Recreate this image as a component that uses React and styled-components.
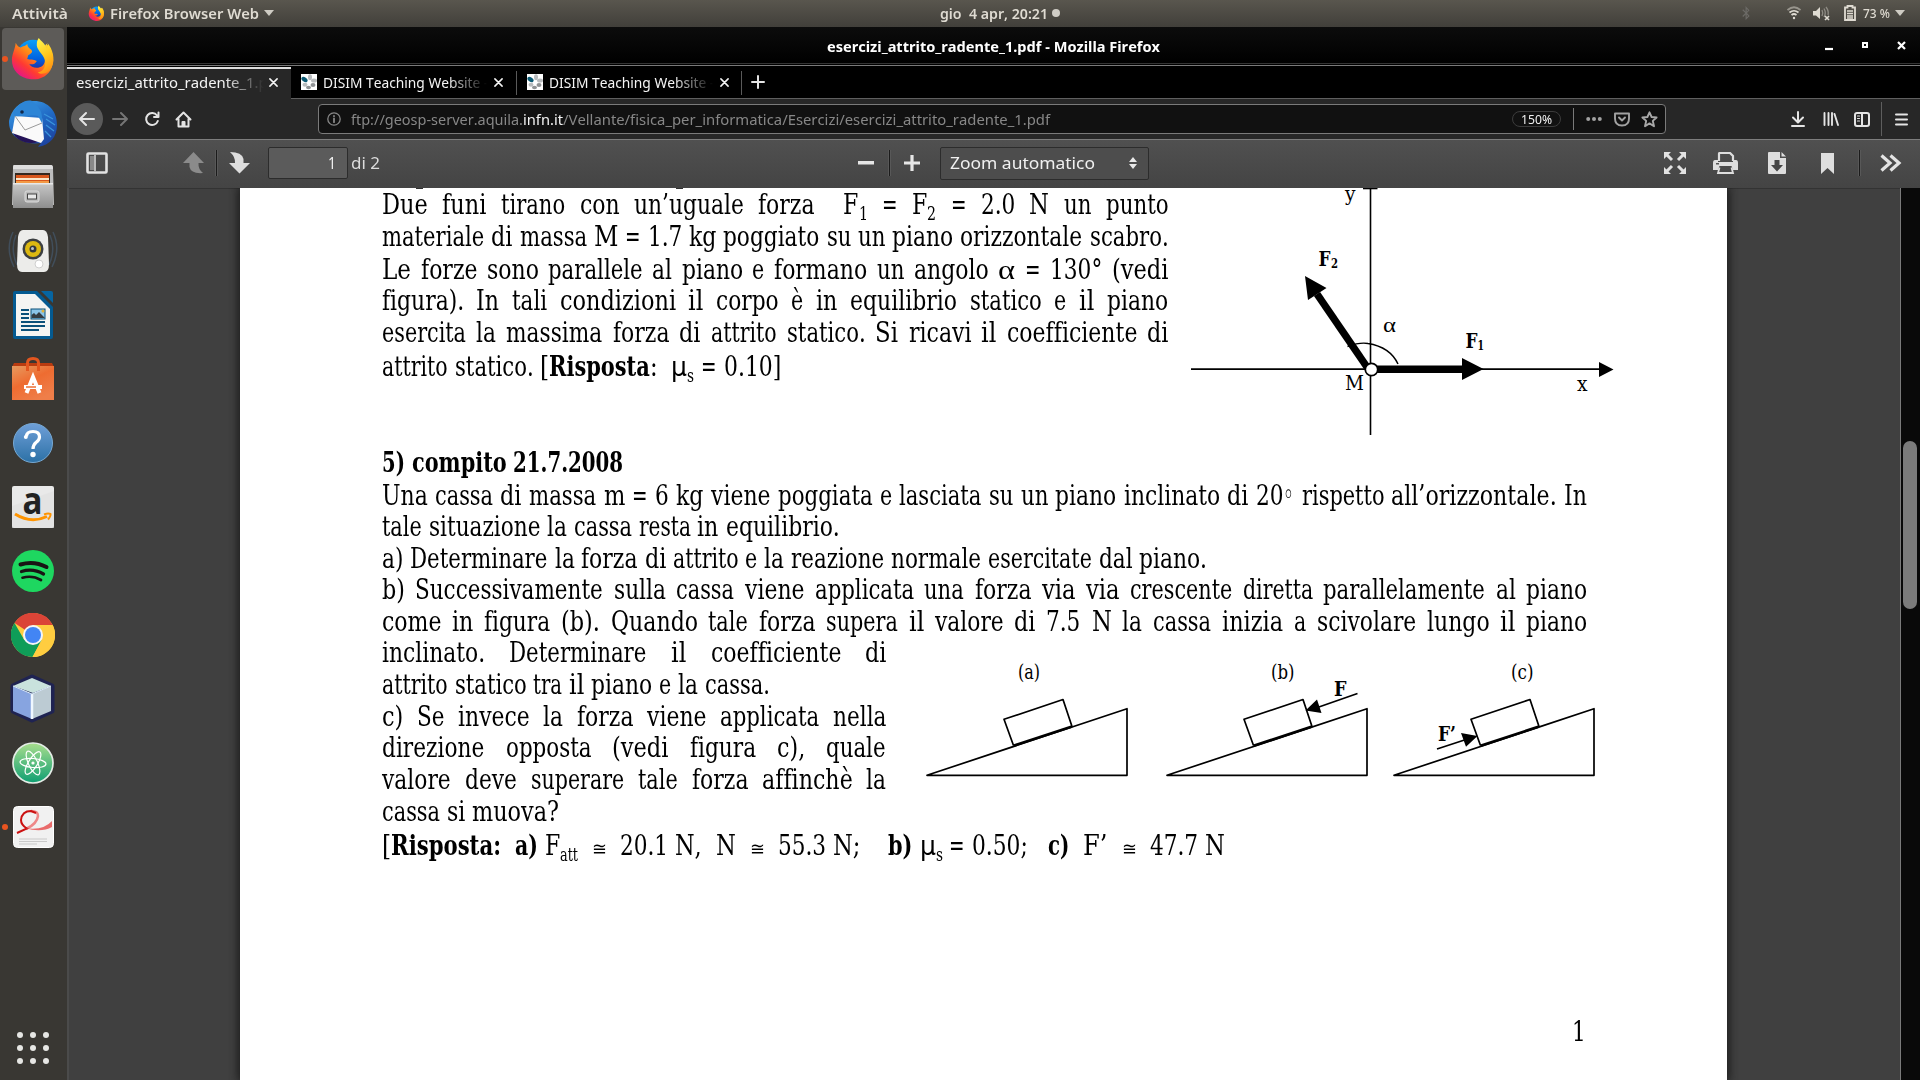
import React from "react";
import styled, { createGlobalStyle } from "styled-components";
import { FaBluetoothB } from "react-icons/fa";

const UI = '"Noto Sans", "Open Sans", sans-serif';
const SERIF = '"DejaVu Serif Condensed", "DejaVu Serif", serif';
const TIMES = '"Liberation Serif", serif';

const Global = createGlobalStyle`
  * { box-sizing: border-box; }
  html, body { margin: 0; padding: 0; height: 1080px; overflow: hidden; background: #000; }
`;

/* ---------- text measuring ---------- */
const ctx = document.createElement("canvas").getContext("2d");
ctx.fontKerning = "none";
const measure = (text, font) => {
  ctx.font = font;
  return ctx.measureText(text).width;
};

const Slot = styled.span`
  display: inline-block;
  white-space: pre;
  vertical-align: baseline;
  flex: none;
`;
const Squeezed = styled.span`
  display: inline-block;
  transform-origin: 0 50%;
  font-family: ${(p) => p.$family};
  font-size: ${(p) => p.$size}px;
  font-weight: ${(p) => p.$weight};
  font-kerning: none;
  font-variant-ligatures: none;
  white-space: pre;
`;

function Fitted({ text, width, size = 15, weight = 400, family = UI }) {
  const natural = measure(text, `${weight} ${size}px ${family}`);
  return (
    <Slot style={{ width }}>
      <Squeezed $family={family} $size={size} $weight={weight} style={{ transform: `scaleX(${width / natural})`, marginRight: width - natural }}>
        {text}
      </Squeezed>
    </Slot>
  );
}

/* ---------- shell ---------- */
const Screen = styled.div`
  width: 1920px;
  height: 1080px;
  display: flex;
  flex-direction: column;
  overflow: hidden;
  background: #000;
  font-family: ${UI};
`;
const Spacer = styled.div`
  flex: ${(p) => (p.$w ? "none" : 1)};
  width: ${(p) => (p.$w ? p.$w + "px" : "auto")};
`;
const TopBar = styled.header`
  height: 27px;
  flex: none;
  display: grid;
  grid-template-columns: 940px 1fr 175px;
  background: linear-gradient(#59564e, #413f3a);
  color: #dfdbd2;
  line-height: 25px;
  padding-bottom: 2px;
`;
const BarGroup = styled.div`
  display: flex;
  align-items: center;
  padding-left: ${(p) => p.$pad || 0}px;
`;
const Triangle = styled.span`
  width: 10px;
  height: 6px;
  background: #cfccc4;
  clip-path: polygon(0 0, 100% 0, 50% 100%);
`;
const Dot = styled.span`
  width: 8px;
  height: 8px;
  border-radius: 50%;
  background: #d0cdc6;
  margin-left: 4px;
`;
const Body = styled.div`
  flex: 1;
  display: flex;
  min-height: 0;
`;
const Dock = styled.nav`
  width: 67px;
  flex: none;
  display: flex;
  flex-direction: column;
  background: #393733;
  padding-top: 1px;
`;
const DockItem = styled.div`
  height: 62px;
  width: 62px;
  margin: 0 0 2px 2px;
  border-radius: 4px;
  display: flex;
  align-items: center;
  justify-content: center;
  flex: none;
  background: ${(p) => (p.$active ? "#5d5b58" : "transparent")};
  position: relative;
  &::before {
    content: "";
    display: ${(p) => (p.$running ? "block" : "none")};
    position: absolute;
    left: 0;
    top: 28px;
    width: 6px;
    height: 6px;
    border-radius: 50%;
    background: #e95420;
  }
`;
const AppsButton = styled.div`
  margin: auto 0 16px 17px;
  display: grid;
  grid-template-columns: repeat(3, 6px);
  gap: 7px;
  span { height: 6px; border-radius: 50%; background: #e6e6e4; }
`;
const Window = styled.main`
  flex: 1;
  display: flex;
  flex-direction: column;
  min-width: 0;
`;
const TitleBar = styled.div`
  height: 37px;
  flex: none;
  display: flex;
  align-items: center;
  padding-left: 760px;
  padding-top: 2px;
  background: linear-gradient(#0c0c0c, #000);
  border-bottom: 1px solid #333;
  color: #fff;
  line-height: 34px;
`;
const WinButtons = styled.div`
  margin-left: auto;
  padding-right: 14px;
  display: flex;
`;

/* ---------- tabs ---------- */
const TabStrip = styled.div`
  height: 34px;
  flex: none;
  display: flex;
  border-top: 1px solid #7a7a7a;
  background: #000;
  margin-top: 1px;
`;
const Tab = styled.div`
  flex: none;
  width: ${(p) => p.$w}px;
  display: flex;
  align-items: center;
  padding: ${(p) => (p.$active ? "0 0 3px 9px" : "0 0 0 10px")};
  border-top: ${(p) => (p.$active ? "2px solid #dedede" : "none")};
  margin-top: ${(p) => (p.$active ? "1px" : "0")};
  height: ${(p) => (p.$active ? "32px" : "33px")};
  background: ${(p) => (p.$active ? "#272727" : "#000")};
  border-bottom: ${(p) => (p.$active ? "none" : "1px solid #5f5f5f")};
  color: #f4f4f4;
  line-height: 27px;
`;
const TabLabel = styled.div`
  width: ${(p) => p.$w}px;
  flex: none;
  overflow: hidden;
  white-space: nowrap;
  mask-image: linear-gradient(to right, #000 ${(p) => p.$w - 40}px, transparent ${(p) => p.$w}px);
`;
const TabDivider = styled.div`
  width: 1px;
  height: 24px;
  margin-top: 5px;
  background: #5a5a5a;
`;
const DividerCell = styled.div`
  width: 1px;
  border-bottom: 1px solid #5f5f5f;
`;
const TabRest = styled.div`
  flex: 1;
  display: flex;
  align-items: center;
  padding-left: 9px;
  color: #e4e4e4;
  border-bottom: 1px solid #5f5f5f;
`;

/* ---------- navigation ---------- */
const NavBar = styled.div`
  height: 41px;
  flex: none;
  display: flex;
  align-items: center;
  padding-left: 4px;
  background: #272727;
  border-bottom: 1px solid #7d7d7d;
  color: #e4e4e4;
`;
const BackButton = styled.div`
  width: 32px;
  height: 32px;
  border-radius: 50%;
  background: #5a5a5a;
  display: flex;
  align-items: center;
  justify-content: center;
`;
const UrlBox = styled.div`
  width: 1348px;
  height: 30px;
  display: flex;
  align-items: center;
  border: 1px solid #7a7a7a;
  border-radius: 4px;
  background: #111;
  padding-left: 8px;
  color: #878787;
  line-height: 28px;
`;
const Host = styled.span`
  color: #f4f4f4;
`;
const ZoomPill = styled.div`
  width: 49px;
  height: 16px;
  border: 1px solid #3c3c3c;
  border-radius: 8px;
  display: flex;
  align-items: center;
  justify-content: center;
  color: #f0f0f0;
  line-height: 14px;
`;
const Rule = styled.div`
  width: 1px;
  height: ${(p) => p.$h}px;
  background: ${(p) => p.$c};
`;

/* ---------- pdf toolbar ---------- */
const PdfBar = styled.div`
  height: 48px;
  flex: none;
  display: flex;
  align-items: center;
  padding: 0 0 2px 19px;
  background: linear-gradient(#505050, #444);
  color: #dcdcdc;
  line-height: 30px;
`;
const BarRule = styled.div`
  width: 3px;
  height: 26px;
  background: #1b1b1b;
  border: solid #585858;
  border-width: 0 1px;
`;
const PageField = styled.div`
  width: 80px;
  height: 32px;
  border: 1px solid #2c2c2c;
  border-radius: 2px;
  background: #5b5b5b;
  display: flex;
  justify-content: flex-end;
  padding-right: 11px;
  color: #f2f2f2;
  line-height: 29px;
`;
const ZoomSelect = styled.div`
  width: 209px;
  height: 33px;
  border: 1px solid #2c2c2c;
  border-radius: 2px;
  background: #4d4d4d;
  display: flex;
  align-items: center;
  padding-left: 9px;
  color: #f0f0f0;
`;

/* ---------- document ---------- */
const Viewer = styled.div`
  flex: 1;
  min-height: 0;
  display: flex;
  background: #404040;
  border-left: 2px solid #4b4b4b;
  box-shadow: inset 0 1px 0 #333;
`;
const Sheet = styled.article`
  width: 1487px;
  margin-left: 171px;
  height: 892px;
  flex: none;
  background: #fff;
  box-shadow: 0 0 9px 2px #1a1a1a;
  clip-path: inset(0 -12px);
  color: #000;
  display: flex;
  flex-direction: column;
  padding: 0 0 0 142px;
`;
const Descenders = styled.div`
  height: 1px;
  flex: none;
  display: flex;
  gap: 253px;
  padding-left: 34px;
  span { width: 7px; height: 1px; background: #333; }
`;
const Split = styled.section`
  display: grid;
  grid-template-columns: ${(p) => p.$cols};
  flex: none;
  height: ${(p) => p.$h}px;
  & > svg { overflow: visible; display: block; }
`;
const Block = styled.section`
  width: 1205px;
`;
const Line = styled.div`
  height: ${(p) => p.$h}px;
  line-height: 30px;
  font-family: ${TIMES};
  font-size: 27.5px;
  white-space: nowrap;
  text-align: left;
  text-align-last: ${(p) => (p.$just ? "justify" : "left")};
`;
const Sub = styled.span`
  display: inline-block;
  line-height: 0;
  position: relative;
  top: 6px;
`;
const PageNumber = styled.footer`
  margin: auto 0 29px;
  width: 1204px;
  text-align: right;
  line-height: 32px;
`;
const ScrollTrack = styled.div`
  margin-left: auto;
  width: 20px;
  border-left: 1px solid #7a7a7a;
  background: #090909;
  padding: 253px 3px 0 2px;
`;
const ScrollThumb = styled.div`
  height: 168px;
  border-radius: 7px;
  background: #7b7b7b;
`;

function Word({ text, bold, size = 27.5, family = SERIF }) {
  const weight = bold ? 700 : 400;
  return <Fitted text={text} size={size} weight={weight} family={family} width={measure(text, `${weight} ${size}px ${TIMES}`)} />;
}

/* Segments: a string is plain text, {b} bold, {low} subscript, {sym,size,w,font} a symbol glyph. */
function Text({ segs }) {
  return segs.map((seg, i) => {
    const plain = typeof seg === "string";
    if (!plain && seg.low) return <Sub key={i}><Word text={seg.low} size={18} /></Sub>;
    if (!plain && seg.sym) return <Fitted key={i} text={seg.sym} size={seg.size} width={seg.w} family={seg.font} />;
    const text = plain ? seg : seg.b;
    return text.split(/( +)/).map((part, j) => {
      if (!part) return null;
      if (part[0] === " ") return "\u00a0".repeat(part.length - 1) + " ";
      return <Word key={i + "-" + j} text={part} bold={!plain} />;
    });
  });
}

const ALPHA = { sym: "α", size: 27, w: 17, font: TIMES };
const MU = { sym: "μ", size: 27, w: 16, font: '"DejaVu Sans", sans-serif' };
const CONG = { sym: "≅", size: 18, w: 15, font: '"DejaVu Sans", sans-serif' };
const RING = { sym: "◦", size: 30, w: 11, font: '"DejaVu Sans", sans-serif' };

const ropes = [
  [32, true, ["Due funi tirano con un’uguale forza  F", { low: "1" }, " = F", { low: "2" }, " = 2.0 N un punto"]],
  [33, true, ["materiale di massa M = 1.7 kg poggiato su un piano orizzontale scabro."]],
  [31, true, ["Le forze sono parallele al piano e formano un angolo ", ALPHA, " = 130° (vedi"]],
  [32, true, ["figura). In tali condizioni il corpo è in equilibrio statico e il piano"]],
  [34, true, ["esercita la massima forza di attrito statico. Si ricavi il coefficiente di"]],
  [95, false, ["attrito statico. [", { b: "Risposta" }, ":  ", MU, { low: "s" }, " = 0.10]"]],
];
const crate = [
  [33, false, [{ b: "5) compito 21.7.2008" }]],
  [31, true, ["Una cassa di massa m = 6 kg viene poggiata e lasciata su un piano inclinato di 20", RING, " rispetto all’orizzontale. In"]],
  [32, false, ["tale situazione la cassa resta in equilibrio."]],
  [31, false, ["a) Determinare la forza di attrito e la reazione normale esercitate dal piano."]],
  [32, true, ["b) Successivamente sulla cassa viene applicata una forza via via crescente diretta parallelamente al piano"]],
  [31, true, ["come in figura (b). Quando tale forza supera il valore di 7.5 N la cassa inizia a scivolare lungo il piano"]],
];
const crateNarrow = [
  [32, true, ["inclinato. Determinare il coefficiente di"]],
  [32, false, ["attrito statico tra il piano e la cassa."]],
  [31, true, ["c) Se invece la forza viene applicata nella"]],
  [32, true, ["direzione opposta (vedi figura c), quale"]],
  [32, true, ["valore deve superare tale forza affinchè la"]],
  [34, false, ["cassa si muova?"]],
];
const answer = [
  [34, false, ["[", { b: "Risposta:  a)" }, " F", { low: "att" }, "  ", CONG, "  20.1 N,  N  ", CONG, "  55.3 N;    ", { b: "b)" }, " ", MU, { low: "s" }, " = 0.50;   ", { b: "c)" }, "  F’  ", CONG, "  47.7 N"]],
];

const Lines = ({ rows }) => rows.map(([h, just, segs], i) => <Line key={i} $h={h} $just={just}><Text segs={segs} /></Line>);

/* ---------- figures ---------- */
const Label = ({ x, y, w, children, bold, size = 20, family = SERIF }) => (
  <text x={x} y={y} textLength={w} lengthAdjust="spacingAndGlyphs" fontFamily={family} fontSize={size} fontWeight={bold ? 700 : 400}>{children}</text>
);

function ForcesFigure() {
  return (
    <svg width="430" height="257" viewBox="1190 189 430 257">
      <g stroke="#000" fill="none">
        <path d="M1370.5 188V435" strokeWidth="1.6" />
        <path d="M1363 188.5H1377.5" strokeWidth="1.6" />
        <path d="M1191 369.2H1600" strokeWidth="1.7" />
        <path d="M1372 369.2H1463" strokeWidth="7.4" />
        <path d="M1369 370L1317 294" strokeWidth="7.4" />
        <path d="M1347.500 346.500Q1360 342 1368 343.500Q1390 347 1398 364" strokeWidth="1.5" />
      </g>
      <path d="M1599 362L1613.500 369.500L1599 377ZM1462 358L1483.500 369L1462 380ZM1305 276L1326.500 288L1308 300Z" />
      <circle cx="1371.500" cy="369.500" r="6.200" fill="#fff" stroke="#000" strokeWidth="1.700" />
      <Label x={1345} y={201} w={10.5}>y</Label>
      <Label x={1318.500} y={266} w={12} bold>F</Label>
      <Label x={1331} y={268} w={7} size={13.500} bold>2</Label>
      <Label x={1383} y={332} w={13} family={TIMES} size={22}>α</Label>
      <Label x={1465.500} y={348} w={12} bold>F</Label>
      <Label x={1477.500} y={350} w={6.500} size={13.500} bold>1</Label>
      <Label x={1345} y={390} w={19}>M</Label>
      <Label x={1577} y={391} w={10.5}>x</Label>
    </svg>
  );
}

const Incline = ({ dx }) => (
  <g transform={`translate(${dx} 0)`} fill="none" stroke="#000" strokeWidth="1.700" strokeLinejoin="round">
    <path d="M927 775.300H1127V708.700Z" />
    <path d="M1013.500 745.500L1004 719.300L1063 699.500L1072 726.500" />
    <path d="M1013.500 745.700L1072 726.500" strokeWidth="2.600" />
  </g>
);

function InclineFigure() {
  return (
    <svg width="690" height="150" viewBox="920 637 690 150">
      <Incline dx={0} />
      <Incline dx={240} />
      <Incline dx={467} />
      <path d="M1357.500 693.500L1316 708M1437 749L1466 739.500" stroke="#000" strokeWidth="1.700" />
      <path d="M1305.500 710.500L1317 699.500L1321.500 713ZM1477.500 736L1461 733L1466 746.700Z" />
      <Label x={1018} y={679} w={22}>(a)</Label>
      <Label x={1271} y={679} w={23.500}>(b)</Label>
      <Label x={1511} y={679} w={22.500}>(c)</Label>
      <Label x={1334} y={695.700} w={12.500} bold>F</Label>
      <Label x={1438} y={741} w={18} bold>F’</Label>
    </svg>
  );
}

/* ---------- icons ---------- */
const Svg = ({ w = 16, h = w, vb, children, sw = 2 }) => (
  <svg width={w} height={h} viewBox={vb || `0 0 ${w} ${h}`} fill="none" stroke="currentColor" strokeWidth={sw} strokeLinecap="round" strokeLinejoin="round" style={{ flex: "none" }}>{children}</svg>
);

const FirefoxIcon = ({ s, id }) => (
  <svg width={s} height={s} viewBox="0 0 48 48" style={{ flex: "none" }}>
    <defs>
      <linearGradient id={id + "a"} x1=".85" y1=".1" x2=".15" y2=".9"><stop offset="0" stopColor="#ffd02e" /><stop offset=".4" stopColor="#ff8a16" /><stop offset=".7" stopColor="#ff3a32" /><stop offset="1" stopColor="#e3148b" /></linearGradient>
      <linearGradient id={id + "b"} x1=".5" y1="0" x2=".5" y2="1"><stop offset="0" stopColor="#0aa0f8" /><stop offset=".6" stopColor="#0060df" /><stop offset="1" stopColor="#30208c" /></linearGradient>
      <linearGradient id={id + "c"} x1=".3" y1="0" x2=".6" y2="1"><stop offset="0" stopColor="#fff44a" /><stop offset=".5" stopColor="#ffc91f" /><stop offset="1" stopColor="#ff8d12" /></linearGradient>
    </defs>
    <circle cx="24" cy="21" r="17" fill={`url(#${id}b)`} />
    <path d="M6 7C7 9 8 11 11 12C14 10 16 11 18 8C18 11 20 13 22 14C24 16 23 18 19 20L18 24C21 25 24 24 28 26C26 30 22 30 20 29C22 33 29 35 34 31C38 27 37 20 33 15L38 8C46 16 47 28 42 36C37 44 28 46 22 45C9 44 2 35 2 25C2 19 5 15 6 7Z" fill={`url(#${id}a)`} />
    <path d="M30 2C32 5 37 8 38 13C40 11 40 9 39 7C45 14 47 25 44 31C41 39 33 41 29 38C36 37 38 30 36 24C34 18 27 14 28 8C28 5 29 4 30 2Z" fill={`url(#${id}c)`} />
  </svg>
);

const ThunderbirdIcon = () => (
  <svg width="50" height="50" viewBox="0 -1 50 50">
    <defs><linearGradient id="tb" x1=".2" y1="0" x2=".8" y2="1"><stop offset="0" stopColor="#3b9be4" /><stop offset=".5" stopColor="#2069c4" /><stop offset="1" stopColor="#1c3f9c" /></linearGradient></defs>
    <path d="M1 22C3 11 12 1 24 2C40 1 49 12 49 26C49 38 42 46 30 48L33 44C20 46 7 41 3 32C1 28 1 25 1 22Z" fill="url(#tb)" />
    <path d="M4 32C8 42 20 46 30 43L6 30Z" fill="#251358" />
    <path d="M7 17L34 19L36 40L33 44L4 34Z" fill="#fafafa" />
    <path d="M7 17L17 31L34 24" fill="none" stroke="#9a9a9a" strokeWidth="1" />
    <path d="M5 14C9 5 18 0 24 2C31 8 35 12 34 24L30 17C23 15 13 18 7 17Z" fill="#2d85d6" />
    <path d="M36 15L45 20M38 20L47 26M38 26L46 32M37 32L43 38" fill="none" stroke="#3a94dc" strokeWidth="1.300" />
    <circle cx="14" cy="13" r="1.800" fill="#10284a" />
  </svg>
);
const FilesIcon = () => (
  <svg width="44" height="44" viewBox="0 0 44 44">
    <defs><linearGradient id="fi" x1="0" y1="0" x2="0" y2="1"><stop offset="0" stopColor="#c8c8c8" /><stop offset="1" stopColor="#8e8e8e" /></linearGradient></defs>
    <path d="M3 0H40Q42 0 42 3L43 40H1L2 3Q2 0 3 0Z" fill="#bdbdbd" />
    <path d="M3 0H40Q42 0 42 4H2Q2 0 3 0Z" fill="#dedede" />
    <rect x="4" y="8" width="35" height="11" fill="#35281f" />
    <path d="M5 10H38V18H5Z" fill="#d8571d" /><path d="M5 13H38V15H5Z" fill="#fbe6c8" /><path d="M5 16H38V18H5Z" fill="#f39a45" />
    <path d="M2 18H42V43H2Z" fill="url(#fi)" />
    <path d="M2 18H42V19.500H2Z" fill="#e8e8e8" />
    <rect x="14" y="26" width="14" height="11" rx="2" fill="#bbb" stroke="#dcdcdc" />
    <rect x="16.500" y="29" width="9" height="5" fill="#e8e8e8" stroke="#444" />
  </svg>
);
const SpeakerIcon = () => (
  <svg width="50" height="44" viewBox="0 0 50 44">
    <g fill="none" stroke="#45586c" strokeWidth="1.500" opacity=".7"><path d="M5 3Q-3 20 6 38M8 6Q2 20 9 36M45 3Q53 20 44 38M42 6Q48 20 41 36" /></g>
    <path d="M15 1H35Q39 1 40 8L41 35Q41 43 36 43H14Q9 43 9 35L10 8Q11 1 15 1Z" fill="#ececea" />
    <circle cx="25" cy="20" r="10.500" fill="#3c3f42" /><circle cx="25" cy="20" r="8" fill="#dcb811" /><circle cx="25" cy="20" r="3.500" fill="#33373c" /><circle cx="24.500" cy="19.500" r="1.500" fill="#bcc5cc" />
    <circle cx="31" cy="35" r="4" fill="#fff" stroke="#cfcfcf" />
  </svg>
);
const WriterIcon = () => (
  <svg width="40" height="48" viewBox="0 0 40 48">
    <path d="M2 0H24L40 16V46Q40 48 38 48H2Q0 48 0 46V2Q0 0 2 0Z" fill="#045a91" />
    <path d="M3 3H22L37 18V45H3Z" fill="#f4f4f2" />
    <path d="M28 0H38Q40 0 40 2V12Z" fill="#0665a2" />
    <g fill="#0b5079"><path d="M8 18h8v2H8zM8 22h8v2H8zM8 26h8v2H8zM8 30h24v2H8zM8 34h24v2H8zM8 38h18v2H8z" /></g>
    <rect x="18" y="18" width="14" height="10" fill="#8bc4e8" stroke="#0b5079" /><path d="M18.500 27V24L21 22L23 24L26 21L32 27Z" fill="#353c42" /><circle cx="30" cy="20" r="1.500" fill="#e0b23a" />
  </svg>
);
const SoftwareIcon = () => (
  <svg width="42" height="44" viewBox="0 0 42 44">
    <defs><linearGradient id="so" x1="0" y1="0" x2=".6" y2="1"><stop offset="0" stopColor="#e79a5f" /><stop offset=".5" stopColor="#ee6c31" /><stop offset="1" stopColor="#ef7e49" /></linearGradient></defs>
    <path d="M2 6H40L42 10H0Z" fill="#b93b10" /><rect y="9" width="42" height="34" fill="url(#so)" />
    <path d="M15.500 14V6Q15.500 1.500 21 1.500Q26.500 1.500 26.500 6V14" fill="none" stroke="#e3561f" strokeWidth="3" />
    <path d="M14.500 36L21 20L27.500 36" fill="none" stroke="#fff" strokeWidth="4" /><path d="M12 30H30" stroke="#fff" strokeWidth="4" /><path d="M14 30H24" stroke="#ed6e33" strokeWidth="1.500" />
  </svg>
);
const HelpIcon = () => (
  <svg width="42" height="42" viewBox="0 0 42 42">
    <defs><linearGradient id="he" x1="0" y1="0" x2="0" y2="1"><stop offset="0" stopColor="#6f9fd8" /><stop offset="1" stopColor="#2c71a6" /></linearGradient></defs>
    <circle cx="21" cy="21" r="19.500" fill="url(#he)" stroke="#77a9d4" />
    <path d="M14.500 14.500Q14.500 9.500 21 9.500Q27.500 9.500 27.500 15Q27.500 18 24 20.500Q21 23 21 27" fill="none" stroke="#fff" strokeWidth="3.200" /><circle cx="13.800" cy="15" r="2" fill="#fff" /><circle cx="21" cy="32.500" r="2.700" fill="#fff" />
  </svg>
);
const AmazonIcon = () => (
  <svg width="42" height="42" viewBox="0 0 42 42">
    <rect width="42" height="42" rx="2" fill="#e9e9e9" /><path d="M0 42V20L42 5V42Z" fill="#dfdfdf" opacity=".6" />
    <text x="10.500" y="28" fontFamily='"Open Sans", sans-serif' fontWeight="700" fontSize="38" fill="#222" textLength="20" lengthAdjust="spacingAndGlyphs">a</text>
    <path d="M3 28Q19 38 35 30.500" fill="none" stroke="#ff9400" strokeWidth="3" /><path d="M32 28.500Q36 27 38.500 28Q39 30 36 33.500" fill="none" stroke="#ff9400" strokeWidth="2" />
  </svg>
);
const SpotifyIcon = () => (
  <svg width="42" height="42" viewBox="0 0 42 42">
    <circle cx="21" cy="21" r="21" fill="#1ed760" />
    <g fill="none" stroke="#191414" strokeLinecap="round"><path d="M8.500 14.500Q22 10.500 34.500 17" strokeWidth="4" /><path d="M9.500 21.500Q21 18 31.500 24" strokeWidth="3.300" /><path d="M10.500 27.700Q20.500 25 29 30" strokeWidth="2.700" /></g>
  </svg>
);
const ChromeIcon = () => (
  <svg width="44" height="44" viewBox="0 0 44 44">
    <circle cx="22" cy="22" r="22" fill="#ffcd40" />
    <path d="M22 22L3.500 10A22 22 0 0 1 41.700 12H22Z" fill="#db4437" />
    <path d="M3.500 10L13.300 27L30.700 27L21.500 44A22 22 0 0 1 3.500 10Z" fill="#0f9d58" />
    <path d="M22 12H41.700A22 22 0 0 1 21.500 44L30.700 27Z" fill="#ffcd40" />
    <circle cx="22" cy="22" r="10" fill="#f5f5f5" /><circle cx="22" cy="22" r="8" fill="#4285f4" />
  </svg>
);
const CubeIcon = () => (
  <svg width="48" height="50" viewBox="0 0 48 50">
    <path d="M23 3L43 12V37L23 46L4 37V12Z" fill="#1f2352" stroke="#1f2352" strokeWidth="5" strokeLinejoin="round" />
    <path d="M23 4L42 12L24 19L4 12Z" fill="#c9e2dd" /><path d="M4 12L23 20V45L4 37Z" fill="#87a4e0" /><path d="M42 12L23 20V45L42 37Z" fill="#bccbd3" /><path d="M23 20V45" stroke="#eff7ff" strokeWidth="2.500" /><path d="M4 12L23 20L42 12" fill="none" stroke="#dcebfb" />
  </svg>
);
const AtomIcon = () => (
  <svg width="42" height="42" viewBox="0 0 42 42">
    <defs><linearGradient id="at" x1="0" y1="0" x2="0" y2="1"><stop offset="0" stopColor="#a8dd8d" /><stop offset="1" stopColor="#0f9f72" /></linearGradient></defs>
    <circle cx="21" cy="21" r="20" fill="url(#at)" stroke="#e4ece6" strokeWidth="1.700" />
    <g fill="none" stroke="#fff" strokeWidth="1.200"><ellipse cx="21" cy="21" rx="13" ry="4.500" transform="rotate(5 21 21)" /><ellipse cx="21" cy="21" rx="13" ry="4.500" transform="rotate(65 21 21)" /><ellipse cx="21" cy="21" rx="13" ry="4.500" transform="rotate(-58 21 21)" /></g><circle cx="21" cy="21" r="1.600" fill="#fff" />
  </svg>
);
const EvinceIcon = () => (
  <svg width="41" height="42" viewBox="0 0 41 42">
    <rect x=".5" y=".5" width="40" height="41" rx="4" fill="#f1f1f1" stroke="#fff" />
    <path d="M18 5Q25 5 25 10Q24 18 13 23" fill="none" stroke="#e88" strokeWidth="2.500" /><path d="M4 27L14 22.500Q8 19 8 14Q9 5 18 5L23 7" fill="none" stroke="#cb1111" strokeWidth="2" /><path d="M12 22Q30 25 39 15V21Q28 27 12 22Z" fill="#e96b6b" />
    <path d="M6 33H34M6 35.500H34M6 38H24" stroke="#c9c9c9" strokeWidth="1" />
  </svg>
);

const CloseX = ({ s = 9 }) => <Svg w={s} h={s} vb="0 0 10 10" sw={1.700}><path d="M1 1L9 9M9 1L1 9" /></Svg>;
const Favicon = () => (
  <svg width="16" height="16" viewBox="0 0 16 16" style={{ flex: "none", marginRight: 6 }}>
    <rect width="16" height="16" fill="#fff" />
    <ellipse cx="3.500" cy="5.500" rx="3.400" ry="2.200" fill="#0b5a74" transform="rotate(35 3.500 5.500)" />
    <g fill="#b9bcbe"><ellipse cx="9" cy="3.200" rx="2" ry="3" /><ellipse cx="13" cy="6.500" rx="3" ry="2" /><ellipse cx="4" cy="10.800" rx="2.500" ry="2" /></g><g fill="#8f9294"><ellipse cx="12" cy="11" rx="2.500" ry="2" /><ellipse cx="7.500" cy="13.500" rx="2.500" ry="1.800" /></g>
  </svg>
);

function StatusIcons() {
  return (
    <BarGroup $pad={0}>
      <FaBluetoothB size={14} color="#6c6a66" style={{ marginTop: -1, marginLeft: -6 }} />
      <Spacer $w={34} />
      <svg width="14" height="14" viewBox="0 0 14 14" fill="none" stroke="#dfdbd2" strokeWidth="1.700"><path d="M.5 4Q7-1.500 13.500 4" stroke="#98958d" /><path d="M2.500 6.500Q7 3 11.500 6.500M4.500 9Q7 7 9.500 9" /><circle cx="7" cy="12" r="1.200" fill="#dfdbd2" stroke="none" /></svg>
      <Spacer $w={12} />
      <svg width="18" height="15" viewBox="0 0 18 15" fill="none" stroke="#8f8c85" strokeWidth="1.300"><path d="M0 5H3L7 1V13L3 9.500H0Z" fill="#dfdbd2" stroke="none" /><path d="M9 4Q10.500 7 9 10M11 2.500Q13.500 7 11 11M13 1Q16 5 15 9" /><path d="M12 10L16 14M16 10L12 14" stroke="#dfdbd2" strokeWidth="1.600" /></svg>
      <Spacer $w={13} />
      <svg width="12" height="16" viewBox="0 0 12 16" fill="none" stroke="#dfdbd2"><path d="M1 2.500H3.500V1H8.500V2.500H11V15H1Z" strokeWidth="1.800" /><path d="M3 6H9M3 8.500H9M3 11H9M3 13H9" strokeWidth="1.400" /></svg>
      <Spacer $w={7} />
      <Fitted text="73 %" width={27} size={13} weight={500} />
      <Spacer $w={5} />
      <Triangle />
    </BarGroup>
  );
}

const dockItems = [
  [<FirefoxIcon s={46} id="ffd" />, true, true], [<ThunderbirdIcon />], [<FilesIcon />], [<SpeakerIcon />], [<WriterIcon />], [<SoftwareIcon />], [<HelpIcon />],
  [<AmazonIcon />], [<SpotifyIcon />], [<ChromeIcon />], [<CubeIcon />], [<AtomIcon />], [<EvinceIcon />, false, true],
];

export default function App() {
  return (
    <Screen>
      <Global />
      <TopBar>
        <BarGroup $pad={12}>
          <Fitted text="Attività" width={56} weight={600} />
          <Spacer $w={20} />
          <FirefoxIcon s={17} id="fft" />
          <Spacer $w={5} />
          <Fitted text="Firefox Browser Web" width={149} weight={600} />
          <Spacer $w={5} />
          <Triangle />
        </BarGroup>
        <BarGroup>
          <Fitted text="gio  4 apr, 20:21" width={108} weight={600} />
          <Dot />
        </BarGroup>
        <StatusIcons />
      </TopBar>
      <Body>
        <Dock>
          {dockItems.map(([icon, active, running], i) => (
            <DockItem key={i} $active={active} $running={running}>{icon}</DockItem>
          ))}
          <AppsButton>{Array.from({ length: 9 }, (_, i) => <span key={i} />)}</AppsButton>
        </Dock>
        <Window>
          <TitleBar>
            <Fitted text="esercizi_attrito_radente_1.pdf - Mozilla Firefox" width={333} weight={700} />
            <WinButtons>
              <svg width="82" height="12" viewBox="0 0 82 12" fill="none" stroke="#fff"><path d="M1 9H9" strokeWidth="2.200" /><rect x="39" y="3" width="4" height="4" strokeWidth="2" /><path d="M74 2L81 9M81 2L74 9" strokeWidth="2.200" /></svg>
            </WinButtons>
          </TitleBar>
          <TabStrip>
            <Tab $active $w={224}>
              <TabLabel $w={188}><Fitted text="esercizi_attrito_radente_1.pdf" width={206} /></TabLabel>
              <Spacer $w={5} />
              <CloseX s={9} />
            </Tab>
            <Tab $w={225}>
              <Favicon />
              <TabLabel $w={164}><Fitted text="DISIM Teaching Website - U" width={179} /></TabLabel>
              <Spacer $w={7} />
              <CloseX />
            </Tab>
            <DividerCell><TabDivider /></DividerCell>
            <Tab $w={224}>
              <Favicon />
              <TabLabel $w={164}><Fitted text="DISIM Teaching Website - U" width={179} /></TabLabel>
              <Spacer $w={7} />
              <CloseX />
            </Tab>
            <DividerCell><TabDivider /></DividerCell>
            <TabRest><Svg w={14} sw={2}><path d="M7 1V13M1 7H13" /></Svg></TabRest>
          </TabStrip>
          <NavBar>
            <BackButton><Svg w={16}><path d="M15 8H1M7 2L1 8L7 14" /></Svg></BackButton>
            <Spacer $w={9} />
            <svg width="16" height="16" fill="none" stroke="#757575" strokeWidth="2" strokeLinecap="round" strokeLinejoin="round"><path d="M1 8H15M9 2L15 8L9 14" /></svg>
            <Spacer $w={16} />
            <Svg w={16}><path d="M13 4.500A6 6 0 1 0 13.800 10M14.500 1.500V6H10" /></Svg>
            <Spacer $w={15} />
            <Svg w={17} h={17}><path d="M1.500 8.500L8.500 1.500L15.500 8.500M3.500 8V15.500H13.500V8" /><path d="M7.500 15V11H9.500V15" /></Svg>
            <Spacer $w={126} />
            <UrlBox>
              <Svg w={14} sw={1.300}><circle cx="7" cy="7" r="6.200" /><path d="M7 6.500V10.200M7 4V4.200" strokeWidth="1.800" /></Svg>
              <Spacer $w={10} />
              <Fitted text="ftp://geosp-server.aquila." width={172} />
              <Host><Fitted text="infn.it" width={40} /></Host>
              <Fitted text="/Vellante/fisica_per_informatica/Esercizi/esercizi_attrito_radente_1.pdf" width={487} />
              <Spacer $w={462} />
              <ZoomPill><Fitted text="150%" width={31} size={12} /></ZoomPill>
              <Spacer $w={12} />
              <Rule $h={22} $c="#7a7a7a" />
              <Spacer $w={12} />
              <svg width="16" height="6" fill="#a2a2a2"><circle cx="2.200" cy="3" r="2" /><circle cx="8" cy="3" r="2" /><circle cx="13.800" cy="3" r="2" /></svg>
              <Spacer $w={12} />
              <svg width="16" height="15" viewBox="0 0 16 15" fill="none" stroke="#a2a2a2" strokeWidth="1.900" strokeLinecap="round" strokeLinejoin="round"><path d="M1 1.500H15V6.500Q15 13.500 8 13.500Q1 13.500 1 6.500Z" /><path d="M5 5.500L8 8.500L11 5.500" /></svg>
              <Spacer $w={11} />
              <svg width="17" height="17" viewBox="0 0 17 17" fill="none" stroke="#a8a8a8" strokeWidth="1.900" strokeLinejoin="round"><path d="M8.500 1.300L10.600 6L15.600 6.500L11.800 9.900L13 15.200L8.500 12.400L4 15.200L5.200 9.900L1.400 6.500L6.400 6Z" /></svg>
            </UrlBox>
            <Spacer $w={125} />
            <Svg w={14} h={16}><path d="M7 1V11M2 6.500L7 11.500L12 6.500M1 15H13" /></Svg>
            <Spacer $w={18} />
            <Svg w={16} h={14}><path d="M1.500 1V13M5.500 1V13M9 1V13M11.500 2L15 13" strokeWidth="1.900" /></Svg>
            <Spacer $w={15} />
            <Svg w={16} h={15}><rect x="1" y="1" width="14" height="13" rx="2" /><path d="M8 1V14" /><path d="M3.500 4H5.500M3.500 6.500H5.500M3.500 9H5.500" strokeWidth="1.200" /></Svg>
            <Spacer $w={11} />
            <Rule $h={34} $c="#5e5e5e" />
            <Spacer $w={13} />
            <Svg w={13} h={13}><path d="M1 1.500H12M1 6.500H12M1 11.500H12" /></Svg>
          </NavBar>
          <PdfBar>
            <svg width="22" height="22" fill="none" stroke="#e2e2e2"><rect x="1.500" y="1.500" width="19" height="19" rx="1" strokeWidth="2.600" /><rect x="4" y="4" width="4" height="14" fill="#898989" stroke="none" /><path d="M9 3V19" strokeWidth="1.500" /></svg>
            <Spacer $w={75} />
            <svg width="21" height="22" fill="#8b8b8b"><path d="M10.500 0L21 11H15.500Q15 17 20 21Q8 22 6.500 15V11H0Z" /></svg>
            <Spacer $w={11} />
            <BarRule />
            <Spacer $w={11} />
            <svg width="21" height="22" fill="#dedede"><path d="M1 0Q13 0 14.500 7V11H21L10.500 21.500L0 11H6Q6.500 5 1 0Z" /></svg>
            <Spacer $w={18} />
            <PageField><Fitted text="1" width={8} size={17} /></PageField>
            <Spacer $w={3} />
            <Fitted text="di 2" width={29} size={17} />
            <Spacer $w={478} />
            <svg width="16" height="4"><rect width="16" height="3.500" fill="#e6e6e6" /></svg>
            <Spacer $w={14} />
            <BarRule />
            <Spacer $w={13} />
            <svg width="16" height="16" stroke="#e6e6e6" strokeWidth="3.200"><path d="M8 0V16M0 8H16" /></svg>
            <Spacer $w={20} />
            <ZoomSelect>
              <Fitted text="Zoom automatico" width={145} size={17} />
              <Spacer $w={34} />
              <svg width="8" height="12" fill="#e8e8e8"><path d="M4 0L8 5H0ZM4 12L8 7H0Z" /></svg>
            </ZoomSelect>
            <Spacer $w={515} />
            <svg width="22" height="22" viewBox="0 0 22 22" fill="#e2e2e2" stroke="#e2e2e2" strokeWidth="3"><path d="M2 2L8 8M20 2L14 8M2 20L8 14M20 20L14 14" /><path d="M0 0H7L0 7ZM22 0V7L15 0ZM0 22V15L7 22ZM22 22H15L22 15Z" stroke="none" /></svg>
            <Spacer $w={27} />
            <svg width="25" height="22" viewBox="0 0 25 22"><path d="M6 9V1.500Q6 1 7 1H17L20 4V9" fill="none" stroke="#dedede" strokeWidth="2.200" /><path d="M2 8H5V10H20V8H23Q25 8 25 11V18H20L18.500 14H6.500L5 18H0V11Q0 8 2 8Z" fill="#dedede" /><path d="M6.500 15.500L5 21H20L18.500 15.500" fill="none" stroke="#dedede" strokeWidth="1.800" /><rect x="3" y="11" width="3" height="1.500" fill="#555" /></svg>
            <Spacer $w={30} />
            <svg width="18" height="22" viewBox="0 0 18 22"><path d="M1 0H12V6H18V21Q18 22 17 22H1Q0 22 0 21V1Q0 0 1 0Z" fill="#dedede" /><path d="M13.500 0L18 4.500H13.500Z" fill="#dedede" /><path d="M6.500 8H11.500V13H15L9 19.500L3 13H6.500Z" fill="#444" /></svg>
            <Spacer $w={35} />
            <svg width="13" height="21"><path d="M0 0H13V21L6.500 15L0 21Z" fill="#dedede" /></svg>
            <Spacer $w={24} />
            <BarRule />
            <Spacer $w={19} />
            <svg width="22" height="18" fill="none" stroke="#e4e4e4" strokeWidth="3.200"><path d="M1.500 1.500L10 9L1.500 16.500M10.500 1.500L19 9L10.500 16.500" /></svg>
          </PdfBar>
          <Viewer>
            <Sheet>
              <Descenders><span /><span /></Descenders>
              <Split $cols="786px 22px 1fr" $h={258}>
                <div><Lines rows={ropes} /></div>
                <span />
                <ForcesFigure />
              </Split>
              <Block><Lines rows={crate} /></Block>
              <Split $cols="504px 34px 1fr" $h={193}>
                <div><Lines rows={crateNarrow} /></div>
                <span />
                <InclineFigure />
              </Split>
              <Block><Lines rows={answer} /></Block>
              <PageNumber><Word text="1" /></PageNumber>
            </Sheet>
            <ScrollTrack><ScrollThumb /></ScrollTrack>
          </Viewer>
        </Window>
      </Body>
    </Screen>
  );
}
